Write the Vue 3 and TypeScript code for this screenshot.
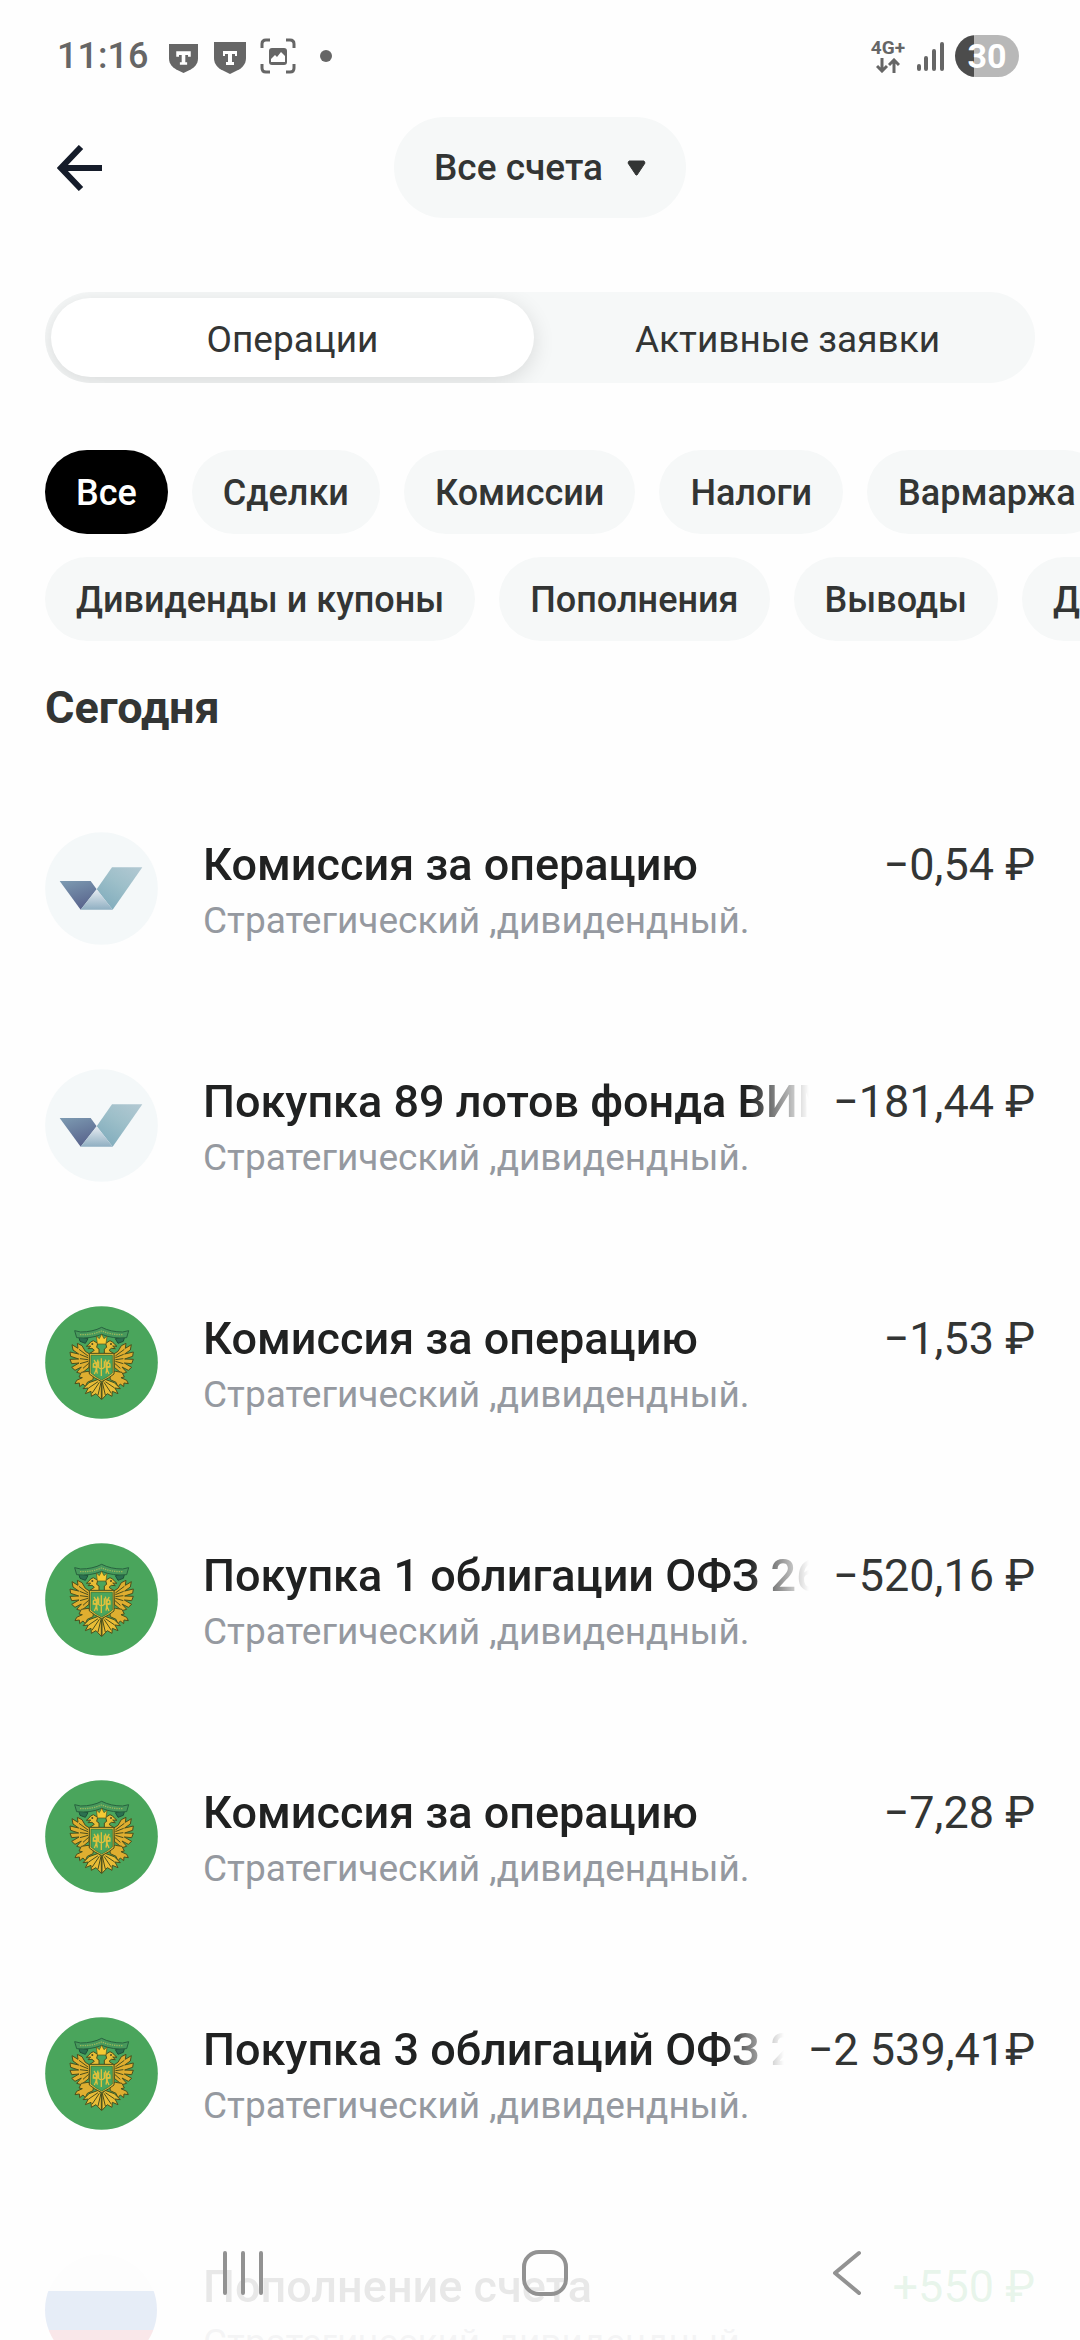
<script setup lang="ts">
import { ref } from 'vue'

type Logo = 'fund' | 'bond' | 'flag'

interface Operation {
  id: number
  logo: Logo
  title: string
  account: string
  amount: string
  income?: boolean
}

const account = 'Стратегический ,дивидендный.'

const tabs = ['Операции', 'Активные заявки']
const activeTab = ref(0)

const filterRows = [
  ['Все', 'Сделки', 'Комиссии', 'Налоги', 'Вармаржа'],
  ['Дивиденды и купоны', 'Пополнения', 'Выводы', 'Другое'],
]
const activeFilter = ref('Все')

const operations: Operation[] = [
  { id: 1, logo: 'fund', title: 'Комиссия за операцию', account, amount: '−0,54 ₽' },
  { id: 2, logo: 'fund', title: 'Покупка 89 лотов фонда ВИМ', account, amount: '−181,44 ₽' },
  { id: 3, logo: 'bond', title: 'Комиссия за операцию', account, amount: '−1,53 ₽' },
  { id: 4, logo: 'bond', title: 'Покупка 1 облигации ОФЗ 26', account, amount: '−520,16 ₽' },
  { id: 5, logo: 'bond', title: 'Комиссия за операцию', account, amount: '−7,28 ₽' },
  { id: 6, logo: 'bond', title: 'Покупка 3 облигаций ОФЗ 26', account, amount: '−2 539,41₽' },
  { id: 7, logo: 'flag', title: 'Пополнение счета', account, amount: '+550 ₽', income: true },
]
</script>

<template>
  <div class="screen">
    <div class="status">
      <span class="time">11:16</span>
      <svg class="shield-small" viewBox="0 0 32 32" aria-hidden="true">
        <path d="M0 0h32v16c0 6-4 10-8 12l-8 4-8-4c-4-2-8-6-8-12z" fill="#666" />
        <path d="M8 8h16v6h-3v-2h-3v8h2v3h-8v-3h2v-8h-3v2H8z" fill="#fff" />
      </svg>
      <svg class="shield" viewBox="0 0 32 32" aria-hidden="true">
        <path d="M0 0h32v16c0 6-4 10-8 12l-8 4-8-4c-4-2-8-6-8-12z" fill="#666" />
        <path d="M9 9h14v5h-2v-2h-3v8h2v3h-8v-3h2v-8h-3v2H9z" fill="#fff" />
      </svg>
      <svg class="capture" viewBox="0 0 36 36" aria-hidden="true">
        <path d="M2 10V6q0-4 4-4h4M26 2h4q4 0 4 4v4M34 26v4q0 4-4 4h-4M10 34H6q-4 0-4-4v-4" fill="none" stroke="#666" stroke-width="3" />
        <rect x="9" y="10" width="18" height="17" rx="3" fill="#666" />
        <path d="M11 24v-3l4-4 2 2 4-5 4 4v6z" fill="#fff" />
      </svg>
      <span class="dot"></span>
      <span class="spacer"></span>
      <span class="network">
        <span>4G+</span>
        <svg viewBox="0 0 24 15" aria-hidden="true">
          <path d="M6 0v12M1 8l5 5 5-5M18 15V2M13 7l5-5 5 5" fill="none" stroke="#666" stroke-width="3" />
        </svg>
      </span>
      <svg class="signal" viewBox="0 0 27 29" aria-hidden="true">
        <path d="M2 24v3M9 16v11M17 9v18M25 2v25" stroke="#666" stroke-width="4" stroke-linecap="round" />
      </svg>
      <span class="battery">30</span>
    </div>

    <header class="header">
      <button class="back" type="button" aria-label="Назад">
        <svg viewBox="0 0 45 46" aria-hidden="true">
          <path d="M24 2L4 23l20 21M4 23h41" fill="none" stroke="#151c2a" stroke-width="6" />
        </svg>
      </button>
      <button class="account" type="button">
        Все счета
        <svg viewBox="0 0 19 16" aria-hidden="true">
          <path d="M2 1h15l1 2-8 12h-1L1 3z" fill="#333534" stroke="#333534" stroke-linejoin="round" />
        </svg>
      </button>
    </header>

    <div class="tabs" role="tablist">
      <button
        v-for="(tab, i) in tabs"
        :key="tab"
        type="button"
        role="tab"
        class="tab"
        :class="{ active: activeTab === i }"
        :aria-selected="activeTab === i"
        @click="activeTab = i"
      >
        {{ tab }}
      </button>
    </div>

    <div class="filters">
      <div v-for="(row, i) in filterRows" :key="i" class="filter-row">
        <button
          v-for="name in row"
          :key="name"
          type="button"
          class="chip"
          :class="{ active: activeFilter === name }"
          @click="activeFilter = name"
        >
          {{ name }}
        </button>
      </div>
    </div>

    <h2 class="day">Сегодня</h2>

    <ul class="list">
      <li v-for="op in operations" :key="op.id" class="row">
        <svg v-if="op.logo === 'fund'" class="avatar" viewBox="46 57 339 339" aria-hidden="true">
          <defs>
            <linearGradient :id="`left-${op.id}`" x1="0" y1="0" x2="0.4" y2="1">
              <stop offset="0" stop-color="#7d9bb2" />
              <stop offset="1" stop-color="#5a668e" />
            </linearGradient>
            <linearGradient :id="`right-${op.id}`" x1="1" y1="0" x2="0.3" y2="1">
              <stop offset="0" stop-color="#b3c9d3" />
              <stop offset="0.5" stop-color="#9dbfc9" />
              <stop offset="1" stop-color="#82adbd" />
            </linearGradient>
            <linearGradient :id="`fold-${op.id}`" x1="0" y1="0" x2="0" y2="1">
              <stop offset="0" stop-color="#e6ebf1" />
              <stop offset="1" stop-color="#8fafc2" />
            </linearGradient>
          </defs>
          <circle cx="215.500" cy="226.500" r="169" fill="#f4f8f9" />
          <path d="M90 204h93l18 25-48 61z" :fill="`url(#left-${op.id})`" />
          <path d="M247 163h91l-89 127-48-61z" :fill="`url(#right-${op.id})`" />
          <path d="M201 229l48 61h-96z" :fill="`url(#fold-${op.id})`" />
        </svg>

        <svg v-else-if="op.logo === 'bond'" class="avatar" viewBox="45 48 339 339" aria-hidden="true">
          <circle cx="214.500" cy="217.500" r="169" fill="#4aa55c" />
          <g stroke-linejoin="round">
            <path d="M146 140l4 14 16 6 8-14zM284 140l-4 14-16 6-8-14z" fill="#2b7050" stroke="#1d5138" stroke-width="3" />
            <path d="M134 122l18 4q36 0 63-14 27 14 63 14l18-4-6 21q-42 4-75-10-33 14-75 10z" fill="#48995c" stroke="#27633f" stroke-width="3" />
            <path d="M150 134q36 1 65-11 29 12 65 11" fill="none" stroke="#9bb85a" stroke-width="4" stroke-dasharray="4 3" />
          </g>
          <g
            v-for="side in ['', 'translate(430 0) scale(-1 1)']"
            :key="side"
            :transform="side"
            stroke="#4b4f1c"
            stroke-width="3"
            stroke-linejoin="round"
          >
            <path d="M179 192l-13-8-10-17-14-7 2 15-18-11 3 16 17 12-26-6 2 13 24 8-26 1 5 13 22-2-22 13 10 9 19-10-14 16 14 4 23-19z" fill="#dfae30" />
            <path d="M147 178l27 20M149 193l25 10M150 206l24 3M150 221l24-7M159 235l17-15" fill="none" />
            <path d="M207 192v-15l-7-5 3-12-13-8-8 4-7 8-6 5 13-1-8 8 12-1 7 6-13 9z" fill="#e9bd36" />
            <circle cx="187" cy="162" r="3" fill="#4b4920" stroke="none" />
            <path d="M174 244l-20 3-7 14 10 2-17 8-5 10 13-2 1 11 10-8 7 8 6-13 17-8 2-16z" fill="#dfae30" />
            <path d="M205 268l-28 10-18 18 16-2-9 17 17-7 1 15 14-8 16 17v-50z" fill="#e9bd36" />
            <path d="M204 275l-28 19M208 277l-22 33M213 277l-9 38" fill="none" />
          </g>
          <path d="M199 138l9 8 7-14 7 14 9-8-3 24h-26z" fill="#f4ca34" stroke="#55531b" stroke-width="2" />
          <path d="M178 190h74v62q-14 12-37 23-23-11-37-23z" fill="#e0b83a" stroke="#4b4f1c" stroke-width="3" />
          <path d="M183 196h64v53q-12 11-32 21-20-10-32-21z" fill="#4aa55c" stroke="#2e7339" stroke-width="2" />
          <g fill="none" stroke="#dfc13c" stroke-width="4">
            <path d="M214 205v53M206 214v18q8 9 17 0v-18M192 210q15 16 1 42M238 210q-15 16-1 42M204 209q-7 25-2 42M226 209q7 25 2 42M188 231h16M226 231h16" />
            <circle cx="196" cy="225" r="6" />
            <circle cx="234" cy="225" r="6" />
          </g>
        </svg>

        <svg v-else class="avatar" viewBox="0 0 113 113" aria-hidden="true">
          <clipPath id="flag-circle"><circle cx="56" cy="56" r="56" /></clipPath>
          <g clip-path="url(#flag-circle)">
            <path d="M0 0h113v37H0z" fill="#f6f6f6" />
            <path d="M0 37h113v39H0z" fill="#1350b9" />
            <path d="M0 76h113v37H0z" fill="#c81428" />
          </g>
        </svg>

        <div class="info">
          <div class="line">
            <span class="title">{{ op.title }}</span>
            <span class="amount" :class="{ income: op.income }">{{ op.amount }}</span>
          </div>
          <div class="sub">{{ op.account }}</div>
        </div>
      </li>
    </ul>

    <nav class="navbar">
      <button type="button" aria-label="Последние приложения">
        <svg viewBox="0 0 46 46" aria-hidden="true">
          <path d="M5 3v40M23 3v40M41 3v40" stroke="#929292" stroke-width="4" stroke-linecap="round" />
        </svg>
      </button>
      <button type="button" aria-label="Главный экран">
        <svg viewBox="0 0 46 46" aria-hidden="true">
          <rect x="2" y="2" width="42" height="42" rx="15" fill="none" stroke="#929292" stroke-width="4" />
        </svg>
      </button>
      <button type="button" aria-label="Назад">
        <svg viewBox="0 0 46 46" aria-hidden="true">
          <path d="M35 3L11 23l24 20" fill="none" stroke="#929292" stroke-width="4" stroke-linecap="round" stroke-linejoin="round" />
        </svg>
      </button>
    </nav>
  </div>
</template>

<style>
body {
  margin: 0;
  background: #fefefe;
}
</style>

<style scoped>
.screen {
  position: relative;
  display: flex;
  flex-direction: column;
  height: 100vh;
  overflow: hidden;
  font-family: Roboto, "Noto Sans", sans-serif;
  color: #333534;
  background: #fefefe;
}

.screen > * {
  flex-shrink: 0;
}

svg {
  display: block;
  flex-shrink: 0;
}

button {
  margin: 0;
  padding: 0;
  border: 0;
  background: none;
  font: inherit;
  color: inherit;
  white-space: nowrap;
}

.status {
  display: flex;
  align-items: center;
  height: 112px;
  padding: 0 61px 0 57px;
  color: #666;
}

.time {
  width: 112px;
  font-size: 36px;
  font-weight: 500;
}

.shield-small {
  width: 29px;
  height: 29px;
  margin: 4px 16px 0 0;
}

.shield {
  width: 32px;
  height: 32px;
  margin: 4px 14px 0 0;
}

.capture {
  width: 36px;
  height: 36px;
}

.dot {
  width: 12px;
  height: 12px;
  margin-left: 24px;
  border-radius: 50%;
  background: #666;
}

.spacer {
  flex: 1;
}

.network {
  display: flex;
  flex-direction: column;
  align-items: center;
  gap: 1px;
  font-size: 19px;
  line-height: 18px;
  font-weight: 700;
}

.network svg {
  width: 24px;
  height: 15px;
}

.signal {
  width: 27px;
  height: 29px;
  margin: 0 11px 0 12px;
}

.battery {
  width: 64px;
  height: 42px;
  border-radius: 21px;
  background: linear-gradient(to right, #4c4c4c 30%, #b8b8b8 30%);
  color: #fff;
  font-size: 34px;
  line-height: 42px;
  font-weight: 700;
  text-align: center;
}

.header {
  display: grid;
  grid-template-columns: 1fr auto 1fr;
  align-items: center;
  padding: 5px 57px 0;
}

.header::after {
  content: "";
}

.back {
  justify-self: start;
}

.back svg {
  width: 45px;
  height: 46px;
}

.account {
  display: flex;
  align-items: center;
  gap: 24px;
  height: 101px;
  padding: 0 40px;
  border-radius: 51px;
  background: #f6f8f8;
  font-size: 37px;
  font-weight: 500;
}

.account svg {
  width: 19px;
  height: 16px;
}

.tabs {
  display: flex;
  gap: 12px;
  margin: 74px 45px 0;
  padding: 6px;
  border-radius: 46px;
  background: #f6f8f8;
  overflow: hidden;
}

.tab {
  flex: 1;
  height: 79px;
  padding-top: 3px;
  border-radius: 40px;
  font-size: 37px;
}

.tab.active {
  background: #fff;
  box-shadow: 0 5px 22px rgba(0, 0, 0, 0.12);
}

.filters {
  display: flex;
  flex-direction: column;
  gap: 23px;
  margin-top: 67px;
}

.filter-row {
  display: flex;
  gap: 24px;
  padding-left: 45px;
  overflow: hidden;
}

.chip {
  flex-shrink: 0;
  height: 84px;
  padding: 2px 31px 0;
  border-radius: 42px;
  background: #f6f8f8;
  font-size: 36px;
  font-weight: 500;
}

.chip.active {
  background: #000;
  color: #fff;
}

.day {
  margin: 39px 45px 34px;
  font-size: 45px;
  line-height: 56px;
  font-weight: 700;
}

.list {
  margin: 0;
  padding: 0;
  list-style: none;
}

.row {
  display: flex;
  align-items: flex-start;
  gap: 45px;
  padding: 62px 45px;
}

.avatar {
  width: 113px;
  height: 113px;
}

.info {
  flex: 1;
  min-width: 0;
  padding-top: 5px;
}

.line {
  display: flex;
  gap: 24px;
  font-size: 45px;
  line-height: 56px;
}

.title {
  flex: 1;
  min-width: 0;
  overflow: hidden;
  white-space: nowrap;
  font-weight: 500;
  color: #202121;
  mask-image: linear-gradient(to right, #000 calc(100% - 60px), transparent);
}

.amount {
  white-space: nowrap;
}

.amount.income {
  color: #22a33c;
}

.sub {
  margin-top: 6px;
  font-size: 37px;
  line-height: 44px;
  color: #9599a0;
}

.navbar {
  position: absolute;
  right: 0;
  bottom: 0;
  left: 0;
  display: flex;
  height: 135px;
  padding: 0 82px 0 92px;
  box-sizing: border-box;
  background: rgba(254, 254, 254, 0.9);
}

.navbar button {
  flex: 1;
  display: flex;
  align-items: center;
  justify-content: center;
}

.navbar svg {
  width: 46px;
  height: 46px;
}
</style>
